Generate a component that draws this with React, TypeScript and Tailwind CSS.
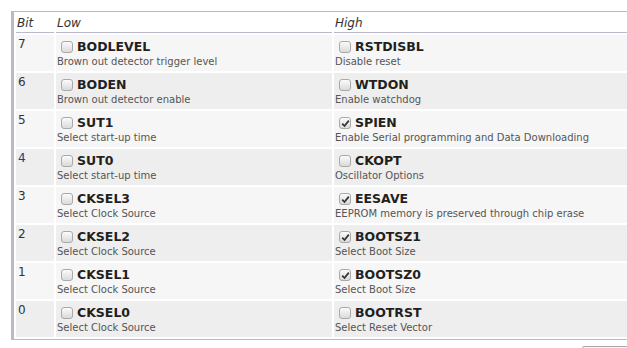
import React from "react"

type Fuse = { name: string; desc: string; checked?: boolean }

const rows: { bit: number; low: Fuse; high: Fuse }[] = [
  { bit: 7, low: { name: "BODLEVEL", desc: "Brown out detector trigger level" }, high: { name: "RSTDISBL", desc: "Disable reset" } },
  { bit: 6, low: { name: "BODEN", desc: "Brown out detector enable" }, high: { name: "WTDON", desc: "Enable watchdog" } },
  { bit: 5, low: { name: "SUT1", desc: "Select start-up time" }, high: { name: "SPIEN", desc: "Enable Serial programming and Data Downloading", checked: true } },
  { bit: 4, low: { name: "SUT0", desc: "Select start-up time" }, high: { name: "CKOPT", desc: "Oscillator Options" } },
  { bit: 3, low: { name: "CKSEL3", desc: "Select Clock Source" }, high: { name: "EESAVE", desc: "EEPROM memory is preserved through chip erase", checked: true } },
  { bit: 2, low: { name: "CKSEL2", desc: "Select Clock Source" }, high: { name: "BOOTSZ1", desc: "Select Boot Size", checked: true } },
  { bit: 1, low: { name: "CKSEL1", desc: "Select Clock Source" }, high: { name: "BOOTSZ0", desc: "Select Boot Size", checked: true } },
  { bit: 0, low: { name: "CKSEL0", desc: "Select Clock Source" }, high: { name: "BOOTRST", desc: "Select Reset Vector" } },
]

function Check({ checked }: { checked?: boolean }) {
  return (
    <span className="inline-flex h-[12px] w-[12px] shrink-0 items-center justify-center rounded-[3px] border border-[#a9a9a9] bg-gradient-to-b from-[#fbfbfb] to-[#dadada]">
      {checked && (
        <svg width="9" height="9" viewBox="0 0 9 9">
          <path d="M1.2 4.6 L3.5 7 L7.8 1.6" fill="none" stroke="#333" strokeWidth="1.7" />
        </svg>
      )}
    </span>
  )
}

function FuseCell({ fuse, bg }: { fuse: Fuse; bg: string }) {
  return (
    <td className={`${bg} h-[36px] px-[1px] align-top`}>
      <div className="flex items-center gap-[4px] pl-[4px] pt-[5px]">
        <Check checked={fuse.checked} />
        <span className="text-[12.5px] font-bold leading-[14px] text-[#231f1c]">{fuse.name}</span>
      </div>
      <div className="mt-[2px] whitespace-nowrap text-[10px] leading-[12px] text-[#555]">{fuse.desc}</div>
    </td>
  )
}

export default function App() {
  return (
    <div className="relative h-[348px] w-[627px] overflow-hidden bg-white font-['DejaVu_Sans',sans-serif] text-[#333]">
      <p className="-mt-[12px] h-[23px] whitespace-nowrap pl-[110px] text-[11px] leading-[12px] text-[#888]">
        Check the fuse bits: a ticked box is programmed (0), an empty one is unprogrammed (1)
      </p>
      <div className="ml-[11px] w-[720px] border-y border-l-[3px] border-[#bcb8cc]">
        <table className="w-full table-fixed border-separate border-spacing-[2px]">
          <colgroup>
            <col className="w-[38px]" />
            <col className="w-[276px]" />
            <col />
          </colgroup>
          <thead>
            <tr>
              <th className="h-[19px] border-b border-[#bcb8cc] px-[1px] text-left align-middle text-[12px] font-normal italic text-[#333]">Bit</th>
              <th className="h-[19px] border-b border-[#bcb8cc] px-[1px] text-left align-middle text-[12px] font-normal italic text-[#333]">Low</th>
              <th className="h-[19px] border-b border-[#bcb8cc] px-[1px] text-left align-middle text-[12px] font-normal italic text-[#333]">High</th>
            </tr>
          </thead>
          <tbody>
            {rows.map((r, i) => {
              const bg = i % 2 === 0 ? "bg-[#f6f6f6]" : "bg-[#eeeeee]"
              return (
                <tr key={r.bit}>
                  <td className={`${bg} px-[2px] pt-[2px] align-top text-[12px] leading-[14px] ${r.bit === 4 ? "text-[#2a3a7a]" : "text-[#333]"}`}>{r.bit}</td>
                  <FuseCell fuse={r.low} bg={bg} />
                  <FuseCell fuse={r.high} bg={bg} />
                </tr>
              )
            })}
          </tbody>
        </table>
      </div>
      <div className="ml-[582px] mt-[6px] h-[20px] w-[80px] rounded-[2px] border border-[#aaa] bg-[#f4f4f4]" />
    </div>
  )
}
